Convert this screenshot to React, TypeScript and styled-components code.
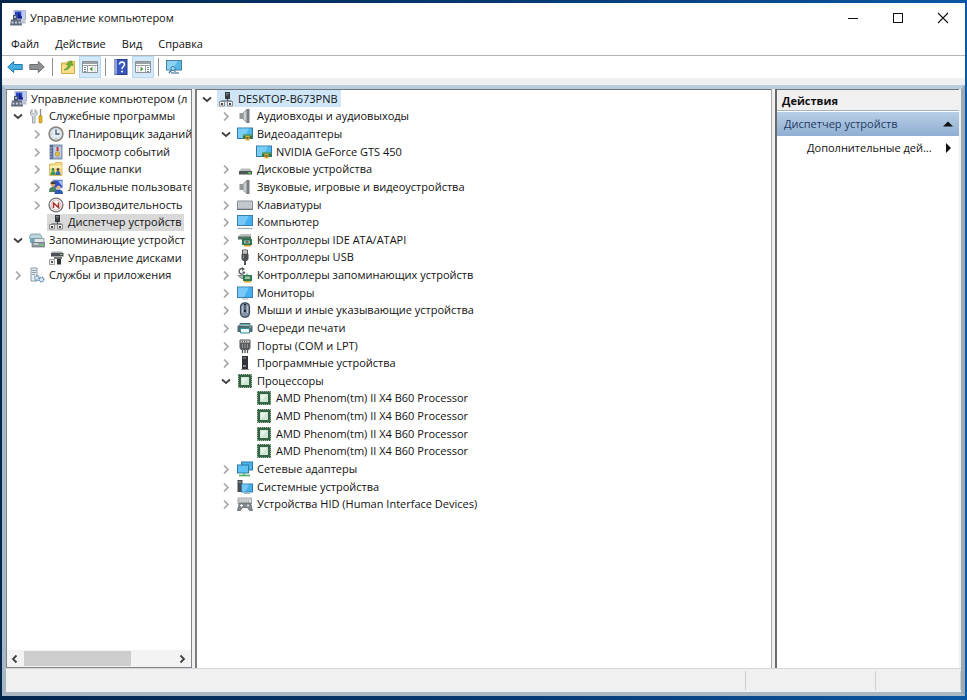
import React from "react";
import styled, { createGlobalStyle, css } from "styled-components";

const GlobalStyle = createGlobalStyle`
  * { box-sizing: border-box; }
  html, body { margin: 0; padding: 0; }
  body {
    font-family: "Open Sans", "Noto Sans", sans-serif;
    font-size: 11px;
    line-height: 16px;
    color: #111;
  }
  button { font: inherit; color: inherit; border: 0; padding: 0; margin: 0; background: none; }
  svg { display: block; flex: none; }
`;

/* ---------- icons, all drawn on a 16 x 16 grid ---------- */

const shapes = {
  management: (
    <>
      <rect x="4" y="0.500" width="11.500" height="9.500" fill="#c9cfe6" stroke="#a3abcb" strokeWidth="0.800" />
      <rect x="5" y="1.500" width="6.500" height="7" fill="#2746c4" />
      <path d="M8 2l4 5v1.500H8z" fill="#14248c" />
      <path d="M11.500 1.500h3V7l-3-1z" fill="#b9c8f5" />
      <path d="M3 5h4v5H3z" fill="#46536b" />
      <path d="M4 6h2v2H4z" fill="#aab6c8" />
      <path d="M1 9.500h10l1 6H0z" fill="#5f6b7c" />
      <path d="M1.500 11.500h2v2h-2zM5 11.500h2v2H5zM8.500 11.500h2v2h-2z" fill="#c5ced8" />
      <path d="M12 10.500h3l1 3h-4z" fill="#b9c0d4" />
    </>
  ),
  tools: (
    <>
      <path d="M3 1.500v3l1.500 1.500L6 4.500v-3l2 2v3L6 8.500v6.500H3.500V8.500L1.500 6.500v-3z" fill="#d5dae0" stroke="#8b939c" strokeWidth="0.800" />
      <path d="M11.500 1v7" stroke="#8e8e8e" strokeWidth="1.300" />
      <rect x="10" y="7.500" width="3" height="7.500" rx="1" fill="#e7b41b" stroke="#a77e12" strokeWidth="0.600" />
    </>
  ),
  clock: (
    <>
      <circle cx="8" cy="8" r="6.900" fill="#e8eef2" stroke="#8d8780" strokeWidth="1.600" />
      <circle cx="8" cy="8" r="5.300" fill="#e4edf4" stroke="#bcd" strokeWidth="0.600" />
      <path d="M8 3.500V8h3.500" stroke="#44566b" strokeWidth="1.300" fill="none" />
      <path d="M8 13v-1M3.500 8h1" stroke="#b08c5a" />
    </>
  ),
  events: (
    <>
      <rect x="2" y="1" width="12" height="14" fill="#9db0cd" stroke="#7d8ea8" />
      <rect x="2" y="1" width="3" height="14" fill="#5b6a90" />
      <rect x="6" y="3" width="7" height="10" fill="#c3cde3" />
      <path d="M9.500 3v4" stroke="#c52a20" strokeWidth="1.800" />
      <circle cx="9.500" cy="10" r="2.200" fill="#e3c14a" stroke="#a88316" strokeWidth="0.600" />
      <path d="M1 4h3M1 7h3M1 10h3M1 13h3" stroke="#ccd5e4" strokeWidth="0.700" />
    </>
  ),
  folders: (
    <>
      <path d="M1.500 3h5l1-1.500h6.500v13h-12.500z" fill="#f4da83" stroke="#d9b85a" strokeWidth="0.900" />
      <path d="M2 4.500h11.500v3H2z" fill="#fbedb0" />
      <circle cx="5" cy="8.500" r="1.400" fill="#3d7f4a" />
      <path d="M2.500 14c0-3 1-4 2.500-4s2.500 1 2.500 4z" fill="#3f9b58" />
      <circle cx="10" cy="8.500" r="1.400" fill="#5b4030" />
      <path d="M7.500 14c0-3 1-4 2.500-4s2.500 1 2.500 4z" fill="#3b6cab" />
    </>
  ),
  users: (
    <>
      <rect x="5" y="1" width="9.500" height="8" fill="#2e50c4" stroke="#a9b5d3" />
      <path d="M10 2h4v5z" fill="#9ac2ff" />
      <circle cx="5" cy="5.500" r="2.300" fill="#d6a26b" />
      <path d="M2.500 5C2.500 2.500 4.500 2 5.500 2.500s2 1 2 2.500z" fill="#4d3b2b" />
      <path d="M1 13c0-4 1.500-5 4-5s4 1.500 4 5z" fill="#4c7f5e" />
      <circle cx="10.500" cy="8.500" r="2" fill="#e1b98a" />
      <path d="M6.500 15c0-3.500 1.500-4.500 4-4.500s4.500 1 4.500 4.500z" fill="#3159b0" />
    </>
  ),
  performance: (
    <>
      <circle cx="8" cy="8" r="6.900" fill="#fff" stroke="#777" strokeWidth="1.400" />
      <circle cx="8" cy="8" r="5" fill="#fff" stroke="#d6a09c" strokeWidth="0.800" />
      <path d="M5.500 11V6l5 4.500V5.500" fill="none" stroke="#ac2d2b" strokeWidth="1.500" />
    </>
  ),
  device: (
    <>
      <rect x="7" y="1" width="5" height="7" fill="#353b40" />
      <path d="M8 2.500h3M8 4h2" stroke="#8c979e" strokeWidth="0.800" />
      <path d="M9.500 8v2H4v1M9.500 10H13v1" fill="none" stroke="#4b5054" strokeWidth="1.200" />
      <path d="M1.500 10.500h5V15h-5zM9.500 10.500h5V15h-5z" fill="#f2f2f2" stroke="#8a8a8a" />
      <path d="M3 12h2v2H3zM11 12h2v2h-2z" fill="#444" />
    </>
  ),
  storage: (
    <>
      <path d="M2 2h9l2 3-1 2H1L0 5z" fill="#bdd5df" stroke="#7394a4" strokeWidth="0.800" />
      <path d="M1 6h8v5H1z" fill="#6ca9bd" />
      <path d="M5 6.500h10v4H5z" fill="#e1e6e8" stroke="#7a8b93" strokeWidth="0.800" />
      <path d="M3 10.500h12.500V15H3z" fill="#8c979e" stroke="#68757c" strokeWidth="0.700" />
      <path d="M11 12h3v1.500h-3z" fill="#6fd06a" />
      <path d="M4.500 12h5" stroke="#fff" />
    </>
  ),
  disks: (
    <>
      <path d="M3 3h12.500v3.500H3z" fill="#4c5054" />
      <path d="M4 1.500h10L15 3H3z" fill="#a9adaf" />
      <path d="M6 7h8v2H6z" fill="#73787b" />
      <path d="M1.500 9.500h5v5h-5z" fill="#ededed" stroke="#888" strokeWidth="0.800" />
      <path d="M9 9h4v5.500H9z" fill="#2e3235" />
      <path d="M3 11h2v2H3z" fill="#555" />
      <path d="M12 4h2v1h-2z" fill="#7ddb72" />
    </>
  ),
  services: (
    <>
      <path d="M2 1h6v13H2z" fill="#e8edf0" stroke="#8b9aa5" />
      <path d="M3 3.500h4M3 5.500h4M3 7.500h3" stroke="#7d95a5" strokeWidth="0.900" />
      <circle cx="8" cy="11" r="2.300" fill="#dce9f4" stroke="#6793b9" strokeWidth="1.400" strokeDasharray="1.200 0.500" />
      <circle cx="12.500" cy="12.500" r="2.300" fill="#dce9f4" stroke="#6793b9" strokeWidth="1.400" strokeDasharray="1.200 0.500" />
    </>
  ),
  speaker: (
    <>
      <path d="M2.500 5h4v6h-4z" fill="#94989b" />
      <path d="M6 5l4-4v14l-4-4z" fill="#b4b8bb" stroke="#8b8f92" strokeWidth="0.700" />
      <path d="M10 1h2.500v14H10z" fill="#777c80" />
      <path d="M8 4v8" stroke="#d7dadc" strokeWidth="1.200" />
    </>
  ),
  display: (
    <>
      <rect x="0.500" y="2" width="15" height="10.500" fill="#4db7ed" stroke="#3779a6" />
      <path d="M1 2.500h11l-5 9.500H1z" fill="#79cdf5" />
      <path d="M6 8.500h9.500V13H6z" fill="#337744" />
      <path d="M6 8.500h9v1.200H6z" fill="#69aa6f" />
      <path d="M8.500 10h4v4.500h-4z" fill="#dfad38" />
      <path d="M9.500 11h2v2h-2z" fill="#705d2d" />
    </>
  ),
  drive: (
    <>
      <path d="M4 7.500h9l1.500 2.500h-12z" fill="#b7bbbd" />
      <path d="M2 10h13v3.500H2z" fill="#4c5550" />
      <path d="M11 11h3v1.500h-3z" fill="#65c95e" />
    </>
  ),
  keyboard: (
    <>
      <path d="M0.500 4h15v8H0.500z" fill="#d0d4da" stroke="#858b92" />
      <path d="M2 6h12M2 8h12M2 10h12" stroke="#aab0b8" strokeWidth="1.100" strokeDasharray="1.300 0.500" />
      <path d="M0 12.500h16" stroke="#6a7077" />
    </>
  ),
  computer: (
    <>
      <rect x="0.500" y="1.500" width="15" height="10" fill="#43aef0" stroke="#3c7fae" />
      <path d="M1 2h11l-5 9H1z" fill="#76c8f6" />
      <path d="M0.500 14.500h15" stroke="#9eafbd" strokeWidth="1.300" />
    </>
  ),
  monitor: (
    <>
      <rect x="0.500" y="2" width="15" height="10.500" fill="#43aef0" stroke="#3c7fae" />
      <path d="M1 2.500h11l-5 9.500H1z" fill="#79c9f6" />
      <path d="M5 14h6" stroke="#9db0be" />
    </>
  ),
  ide: (
    <>
      <path d="M1 4l3-2h10v3H1z" fill="#b9c0bd" />
      <path d="M1 4.500h13v3H1z" fill="#4d7160" />
      <path d="M5 7h10v6H5z" fill="#28744a" />
      <path d="M7 8.500h6v3H7z" fill="#aeb9b2" />
      <path d="M8.500 9.200h3v1.500h-3z" fill="#4c5951" />
      <path d="M7 13h7v1.500H7z" fill="#d1a334" />
    </>
  ),
  usb: (
    <>
      <path d="M5.500 1h5v4h-5z" fill="#eee" stroke="#555" />
      <path d="M7 2.500v1M9 2.500v1" stroke="#444" />
      <path d="M4.500 5h7v5L10 12H6l-1.500-2z" fill="#4b4f52" />
      <path d="M8 12v4" stroke="#555" strokeWidth="2" />
      <path d="M6.500 6v3.500" stroke="#888" />
    </>
  ),
  controller: (
    <>
      <path d="M5 1.500a2.800 2.800 0 1 0 2.500 4L5.500 5" fill="none" stroke="#596067" strokeWidth="1.400" />
      <path d="M5 0l3 2-3 2z" fill="#596067" />
      <path d="M1 8.500h6l3 3H4z" fill="#a9b0ac" stroke="#5c655f" strokeWidth="0.600" />
      <path d="M6 8h9v6H6z" fill="#2b7c4c" />
      <path d="M8 9.500h5V12H8z" fill="#a7c0ad" />
      <path d="M7 14h7v1.500H7z" fill="#d5a937" />
      <path d="M10 6.500V8" stroke="#2b7c4c" />
    </>
  ),
  mouse: (
    <>
      <rect x="3.500" y="0.800" width="9" height="14.400" rx="4.200" fill="#8391a4" stroke="#3c4858" strokeWidth="1.200" />
      <path d="M5.500 4v7M10.500 4v7" stroke="#b3c0d2" strokeWidth="1.200" />
      <path d="M8 2v8" stroke="#1b2633" strokeWidth="2" />
      <path d="M8 3v5" stroke="#d1e3f6" strokeWidth="0.700" />
    </>
  ),
  printer: (
    <>
      <path d="M3 3.500h10V7H3z" fill="#fff" stroke="#4a6065" />
      <path d="M0.500 5.500h15V12h-3v-2h-9v2h-3z" fill="#4c6b70" />
      <path d="M3.500 8.500h9V13h-9z" fill="#eef8f8" stroke="#378b92" />
      <path d="M4 4.500h8" stroke="#58afb5" />
      <path d="M12.500 7h1.500" stroke="#9be1a1" />
    </>
  ),
  port: (
    <>
      <path d="M3 2h10v3H3z" fill="#d8d8d8" stroke="#555" />
      <path d="M2.500 5h11v5L12 12H4l-1.500-2z" fill="#5b5e61" />
      <path d="M5 3.500h6" stroke="#555" strokeDasharray="1 1" />
      <path d="M5.500 6v4M8 6v4M10.500 6v4" stroke="#909497" />
      <path d="M5.500 12v3M10.500 12v3M8 12v3" stroke="#4f5255" strokeWidth="1.300" />
    </>
  ),
  software: (
    <>
      <rect x="5" y="1" width="6" height="13" fill="#303438" />
      <path d="M6 3h3" stroke="#939a9f" />
      <path d="M6 10h3v2H6z" fill="#858d91" />
      <path d="M4 14.500h8" stroke="#888" />
    </>
  ),
  cpu: (
    <>
      <rect x="1.500" y="1.500" width="13" height="13" fill="none" stroke="#3d6b49" strokeDasharray="1.500 0.500" />
      <rect x="2" y="2" width="12" height="12" fill="#356443" />
      <rect x="4" y="4" width="8" height="8" fill="#cfe5d3" />
      <path d="M5 5h6L5 11z" fill="#e6f3e8" />
    </>
  ),
  network: (
    <>
      <rect x="4.500" y="1" width="11" height="8" fill="#4bb3ee" stroke="#2d79a6" />
      <rect x="0.500" y="4" width="11" height="8" fill="#5fc2f5" stroke="#2d79a6" />
      <path d="M7 12v3" stroke="#57b567" strokeWidth="1.500" />
      <path d="M2 14.500h11" stroke="#4bad5c" strokeWidth="1.600" />
    </>
  ),
  system: (
    <>
      <path d="M0.500 1h5v12h-5z" fill="#454b50" />
      <path d="M1.500 3h3" stroke="#aab3b8" />
      <rect x="4.500" y="5" width="11" height="8" fill="#48aeeb" stroke="#347fac" />
      <path d="M5 5.500h7L8.500 12.500H5z" fill="#75c8f4" />
      <path d="M7 14.500h6" stroke="#a3b1ba" />
    </>
  ),
  hid: (
    <>
      <path d="M1 2h13.500v6H1z" fill="#dfe1e3" stroke="#8d9194" strokeWidth="0.800" />
      <path d="M2 4h11M2 6h11" stroke="#999ea2" strokeDasharray="1.200 0.600" />
      <path d="M2.500 7h11l2 7.500h-3L10.500 11.500H5.500L3.500 14.500H0.500z" fill="#83898d" stroke="#5b6165" strokeWidth="0.700" />
      <path d="M3 9.500h3M4.500 8v3" stroke="#fff" strokeWidth="0.900" />
      <circle cx="11" cy="9.500" r="1.100" fill="#e2e4e5" />
    </>
  ),
  back: <path d="M0.700 8l6-5.500v3h8.500v5H6.700v3z" fill="#42aee3" stroke="#2278a6" strokeLinejoin="round" />,
  forward: <path d="M15.300 8l-6-5.500v3H0.800v5h8.500v3z" fill="#8f9294" stroke="#6c6f71" strokeLinejoin="round" />,
  upFolder: (
    <>
      <path d="M1.500 4h5l1-1.500h7v12h-13z" fill="#f2cf63" stroke="#cdab4a" />
      <path d="M2 6h12v8H2z" fill="#f8df8b" />
      <path d="M4 11c2-1 4-3 4.500-5L6.500 5.500 11 1.500l2 5-2-.5C10 9 7.500 11 4 11z" fill="#66b637" stroke="#478a23" strokeWidth="0.600" />
    </>
  ),
  treePane: (
    <>
      <path d="M0.500 2.500h15v11h-15z" fill="#fff" stroke="#8a9197" />
      <path d="M1 3h14v2H1z" fill="#9aa1a7" />
      <path d="M1 6.500h14M5.500 7v6.500" stroke="#999fa5" />
      <path d="M2 8.500h2M2 10.500h2M2 12.500h2" stroke="#6982a0" />
      <path d="M10.500 7.500v5L7.500 10z" fill="#4c9a43" />
      <path d="M13 7v6" stroke="#c4c9cd" />
    </>
  ),
  actionPane: (
    <>
      <path d="M0.500 2.500h15v11h-15z" fill="#fff" stroke="#8a9197" />
      <path d="M1 3h14v2H1z" fill="#9aa1a7" />
      <path d="M1 6.500h14M10.500 7v6.500" stroke="#999fa5" />
      <path d="M12 8.500h2M12 10.500h2M12 12.500h2" stroke="#6982a0" />
      <path d="M5.500 7.500v5l3-2.500z" fill="#4c9a43" />
      <path d="M3 7v6" stroke="#c4c9cd" />
    </>
  ),
  help: (
    <>
      <rect x="2" y="0.500" width="12" height="15" fill="#3858bd" stroke="#263d85" />
      <path d="M2 0.500h2v15H2z" fill="#8ca3dd" />
      <path d="M6.500 5.500c0-3.500 5-3 5 0 0 2-2.500 2-2.500 4.500" fill="none" stroke="#fff" strokeWidth="1.500" />
      <circle cx="9" cy="12.500" r="1" fill="#fff" />
    </>
  ),
  scan: (
    <>
      <rect x="0.500" y="1.500" width="15" height="9.500" fill="#57b8e8" stroke="#467e9f" />
      <path d="M1 2h11l-6 8.500H1z" fill="#8bd1f3" />
      <path d="M9 11v2M5 14h8" stroke="#6c94ab" strokeWidth="1.500" />
      <circle cx="7" cy="9.500" r="2" fill="#a7dbf3" stroke="#3a83aa" />
      <path d="M5.500 11L3 14" stroke="#3f789b" strokeWidth="1.500" />
    </>
  ),
  minimize: <path d="M3 8.500h10" stroke="#111" />,
  maximize: <rect x="3.500" y="3.500" width="9" height="9" fill="none" stroke="#111" />,
  close: <path d="M3 3l10 10M13 3L3 13" stroke="#111" strokeWidth="1.100" />,
  open: <path d="M4 6.500L8 10l4-3.500" fill="none" stroke="#404040" strokeWidth="1.800" />,
  shut: <path d="M6 4.500l4 4-4 4" fill="none" stroke="#a6a6a6" strokeWidth="1.700" />,
  scrollLeft: <path d="M9.500 4.500L6 8l3.500 3.500" fill="none" stroke="#404040" strokeWidth="1.800" />,
  scrollRight: <path d="M6.500 4.500L10 8l-3.500 3.500" fill="none" stroke="#404040" strokeWidth="1.800" />,
  triangleUp: <path d="M3 10.500L8 5.500l5 5z" fill="#111" />,
  triangleRight: <path d="M6 3l5 5-5 5z" fill="#111" />,
};

type IconName = keyof typeof shapes;

const Icon = ({ name }: { name: IconName }) => (
  <svg width="16" height="16" viewBox="0 0 16 16" aria-hidden="true">
    {shapes[name]}
  </svg>
);

/* ---------- window frame ---------- */

const Desktop = styled.div`
  display: flex;
  min-height: 100vh;
  padding: 3px 2px 4px 2px;
  background: linear-gradient(90deg, #03264d, #063a75 55%, #0a57a4);
`;

const Window = styled.main`
  flex: 1;
  min-width: 0;
  display: flex;
  flex-direction: column;
  background: #fff;
`;

const TitleBar = styled.header`
  display: flex;
  align-items: center;
  height: 30px;
  padding-left: 8px;
`;

const Title = styled.h1`
  flex: 1;
  margin: 0 0 0 4px;
  font-size: 11px;
  font-weight: 400;
`;

const CaptionButton = styled.button`
  display: grid;
  place-items: center;
  width: 45px;
  height: 30px;
`;

const MenuBar = styled.nav`
  display: flex;
  align-items: center;
  gap: 16px;
  height: 23px;
  padding-left: 9px;
  border-bottom: 1px solid #b4b4b4;
`;

const MenuButton = styled.button`
  height: 18px;
`;

const ToolBar = styled.div`
  display: flex;
  align-items: center;
  height: 22px;
  padding-left: 2px;
`;

const ToolButton = styled.button<{ $on?: boolean }>`
  display: grid;
  place-items: center;
  width: 22px;
  height: 22px;
  ${(p) => p.$on && css`
    background: #d3e8f8;
    border: 1px solid #b5d9f2;
  `}
`;

const ToolDivider = styled.span`
  width: 1px;
  height: 18px;
  margin: 0 4px;
  background: #8f8f8f;
`;

const Frame = styled.div`
  flex: 1;
  display: flex;
  flex-direction: column;
  min-height: 0;
  border-top: 7px solid #f0f0f0;
  background: #f0f0f0;
`;

const Body = styled.div`
  flex: 1;
  display: flex;
  flex-direction: column;
  border: 4px solid #a9b7c2;
  border-top-color: #b9cddd;
  border-right-color: #9dabb5;
`;

const Panes = styled.div`
  flex: 1;
  display: grid;
  grid-template-columns: 186px minmax(0, 1fr) 184px;
  gap: 3px;
  padding-right: 2px;
`;

const Pane = styled.section<{ $edge: string }>`
  display: flex;
  flex-direction: column;
  min-width: 0;
  overflow: hidden;
  background: #fff;
  border-top: 1px solid #70767b;
  border-left: ${(p) => p.$edge};
`;

const NavPane = styled(Pane)`
  border-right: 1px solid #80868b;
  border-bottom: 1px solid #80868b;
`;

const MainPane = styled(Pane)`
  border-right: 1px solid #a9a9a9;
`;

/* ---------- trees ---------- */

const Tree = styled.ul<{ $height: number; $inset: number }>`
  display: grid;
  grid-auto-rows: 1fr;
  min-height: ${(p) => p.$height}px;
  margin: 0;
  padding: 0 0 0 ${(p) => p.$inset}px;
  list-style: none;
`;

const TreeRow = styled.li<{ $level: number }>`
  display: flex;
  align-items: center;
  gap: 2px;
  min-width: 0;
  padding-left: ${(p) => p.$level * 19}px;
  white-space: nowrap;
`;

const Toggle = styled.button`
  width: 16px;
  height: 16px;
  flex: none;
`;

const Gap = styled.span`
  flex: none;
  width: 16px;
`;

const Item = styled.span<{ $fill?: string }>`
  display: flex;
  align-items: center;
  gap: 4px;
  height: 17px;
  padding: 0 3px 0 1px;
  background: ${(p) => p.$fill ?? "transparent"};
`;

type Node = {
  level: number;
  icon: IconName;
  text: string;
  state?: "open" | "shut";
  fill?: string;
  root?: boolean;
};

const navNodes: Node[] = [
  { level: 0, icon: "management", text: "Управление компьютером (л", root: true },
  { level: 0, icon: "tools", text: "Служебные программы", state: "open" },
  { level: 1, icon: "clock", text: "Планировщик заданий", state: "shut" },
  { level: 1, icon: "events", text: "Просмотр событий", state: "shut" },
  { level: 1, icon: "folders", text: "Общие папки", state: "shut" },
  { level: 1, icon: "users", text: "Локальные пользовате", state: "shut" },
  { level: 1, icon: "performance", text: "Производительность", state: "shut" },
  { level: 1, icon: "device", text: "Диспетчер устройств", fill: "#d9d9d9" },
  { level: 0, icon: "storage", text: "Запоминающие устройст", state: "open" },
  { level: 1, icon: "disks", text: "Управление дисками" },
  { level: 0, icon: "services", text: "Службы и приложения", state: "shut" },
];

const cpuNode: Node = { level: 2, icon: "cpu", text: "AMD Phenom(tm) II X4 B60 Processor" };

const deviceNodes: Node[] = [
  { level: 0, icon: "device", text: "DESKTOP-B673PNB", state: "open", fill: "#cfe6f9" },
  { level: 1, icon: "speaker", text: "Аудиовходы и аудиовыходы", state: "shut" },
  { level: 1, icon: "display", text: "Видеоадаптеры", state: "open" },
  { level: 2, icon: "display", text: "NVIDIA GeForce GTS 450" },
  { level: 1, icon: "drive", text: "Дисковые устройства", state: "shut" },
  { level: 1, icon: "speaker", text: "Звуковые, игровые и видеоустройства", state: "shut" },
  { level: 1, icon: "keyboard", text: "Клавиатуры", state: "shut" },
  { level: 1, icon: "computer", text: "Компьютер", state: "shut" },
  { level: 1, icon: "ide", text: "Контроллеры IDE ATA/ATAPI", state: "shut" },
  { level: 1, icon: "usb", text: "Контроллеры USB", state: "shut" },
  { level: 1, icon: "controller", text: "Контроллеры запоминающих устройств", state: "shut" },
  { level: 1, icon: "monitor", text: "Мониторы", state: "shut" },
  { level: 1, icon: "mouse", text: "Мыши и иные указывающие устройства", state: "shut" },
  { level: 1, icon: "printer", text: "Очереди печати", state: "shut" },
  { level: 1, icon: "port", text: "Порты (COM и LPT)", state: "shut" },
  { level: 1, icon: "software", text: "Программные устройства", state: "shut" },
  { level: 1, icon: "cpu", text: "Процессоры", state: "open" },
  cpuNode,
  cpuNode,
  cpuNode,
  cpuNode,
  { level: 1, icon: "network", text: "Сетевые адаптеры", state: "shut" },
  { level: 1, icon: "system", text: "Системные устройства", state: "shut" },
  { level: 1, icon: "hid", text: "Устройства HID (Human Interface Devices)", state: "shut" },
];

type TreeViewProps = { nodes: Node[]; height: number; inset: number; label: string };

const TreeView = ({ nodes, height, inset, label }: TreeViewProps) => (
  <Tree $height={height} $inset={inset} role="tree" aria-label={label}>
    {nodes.map((n, i) => (
      <TreeRow
        key={i}
        $level={n.level}
        role="treeitem"
        aria-level={n.level + 1}
        aria-expanded={n.state ? n.state === "open" : undefined}
      >
        {n.state ? (
          <Toggle type="button" aria-label={n.text}>
            <Icon name={n.state} />
          </Toggle>
        ) : (
          !n.root && <Gap />
        )}
        <Item $fill={n.fill}>
          <Icon name={n.icon} />
          {n.text}
        </Item>
      </TreeRow>
    ))}
  </Tree>
);

/* ---------- scroll bar ---------- */

const ScrollBar = styled.div`
  display: flex;
  align-items: center;
  height: 17px;
  margin-top: auto;
  background: #f3f3f3;
`;

const ScrollButton = styled.button`
  width: 17px;
  height: 16px;
`;

const Track = styled.div`
  flex: 1;
  height: 15px;
`;

const Thumb = styled.div`
  width: 71%;
  height: 100%;
  background: #cdcdcd;
`;

/* ---------- actions ---------- */

const ActionsTitle = styled.h2`
  margin: 0;
  padding: 3px 5px 1px;
  font-size: 11px;
  line-height: 16px;
  font-weight: 700;
  background: #f0f0f0;
  border-bottom: 1px solid #a8b4bd;
`;

const ActionRow = styled.button<{ $group?: boolean }>`
  display: flex;
  align-items: center;
  justify-content: space-between;
  height: 24px;
  padding: 0 3px 0 ${(p) => (p.$group ? 7 : 30)}px;
  text-align: left;
  ${(p) => p.$group && css`
    margin-top: 1px;
    color: #1d3b63;
    background: linear-gradient(#b9cee6, #8faed2);
  `}
`;

const ActionText = styled.span`
  white-space: nowrap;
`;

/* ---------- status bar ---------- */

const StatusBar = styled.footer`
  display: grid;
  grid-template-columns: 1fr 130px 85px;
  height: 24px;
  padding: 2px 0;
  border-top: 1px solid #d7d7d7;
`;

const StatusCell = styled.span`
  border-right: 1px solid #cfcfcf;
`;

export default function App() {
  return (
    <>
      <GlobalStyle />
      <Desktop>
        <Window>
          <TitleBar>
            <Icon name="management" />
            <Title>Управление компьютером</Title>
            <CaptionButton type="button" aria-label="Свернуть"><Icon name="minimize" /></CaptionButton>
            <CaptionButton type="button" aria-label="Развернуть"><Icon name="maximize" /></CaptionButton>
            <CaptionButton type="button" aria-label="Закрыть"><Icon name="close" /></CaptionButton>
          </TitleBar>
          <MenuBar>
            {["Файл", "Действие", "Вид", "Справка"].map((m) => (
              <MenuButton type="button" key={m}>{m}</MenuButton>
            ))}
          </MenuBar>
          <ToolBar>
            <ToolButton type="button" aria-label="Назад"><Icon name="back" /></ToolButton>
            <ToolButton type="button" aria-label="Вперёд"><Icon name="forward" /></ToolButton>
            <ToolDivider />
            <ToolButton type="button" aria-label="Вверх"><Icon name="upFolder" /></ToolButton>
            <ToolButton type="button" $on aria-label="Дерево консоли"><Icon name="treePane" /></ToolButton>
            <ToolDivider />
            <ToolButton type="button" aria-label="Справка"><Icon name="help" /></ToolButton>
            <ToolButton type="button" $on aria-label="Панель действий"><Icon name="actionPane" /></ToolButton>
            <ToolDivider />
            <ToolButton type="button" aria-label="Обновить конфигурацию"><Icon name="scan" /></ToolButton>
          </ToolBar>
          <Frame>
            <Body>
              <Panes>
                <NavPane $edge="1px solid #80868b">
                  <TreeView nodes={navNodes} height={194} inset={3} label="Дерево консоли" />
                  <ScrollBar>
                    <ScrollButton type="button" aria-label="Влево"><Icon name="scrollLeft" /></ScrollButton>
                    <Track><Thumb /></Track>
                    <ScrollButton type="button" aria-label="Вправо"><Icon name="scrollRight" /></ScrollButton>
                  </ScrollBar>
                </NavPane>
                <MainPane $edge="2px solid #7d7d7d">
                  <TreeView nodes={deviceNodes} height={423} inset={2} label="Устройства" />
                </MainPane>
                <Pane $edge="2px solid #6b6b6b">
                  <ActionsTitle>Действия</ActionsTitle>
                  <ActionRow type="button" $group>
                    <ActionText>Диспетчер устройств</ActionText>
                    <Icon name="triangleUp" />
                  </ActionRow>
                  <ActionRow type="button">
                    <ActionText>Дополнительные дей...</ActionText>
                    <Icon name="triangleRight" />
                  </ActionRow>
                </Pane>
              </Panes>
              <StatusBar>
                <StatusCell />
                <StatusCell />
                <StatusCell />
              </StatusBar>
            </Body>
          </Frame>
        </Window>
      </Desktop>
    </>
  );
}
